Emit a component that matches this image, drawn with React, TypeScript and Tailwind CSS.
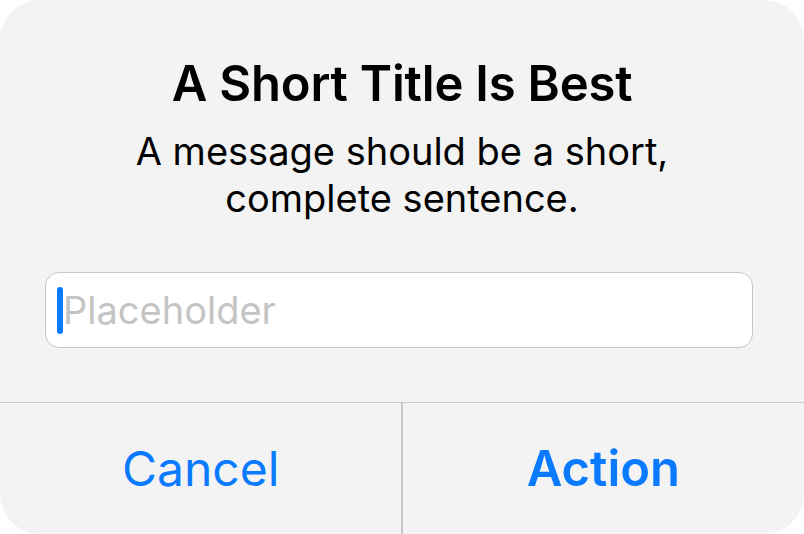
import React from 'react';

export default function App() {
  return (
    <div className="w-[804px] h-[534px] bg-white font-['Inter',sans-serif]">
      <div className="w-full h-full bg-[#f3f3f3] rounded-[40px] flex flex-col overflow-hidden">
        {/* Body */}
        <div className="h-[402px] flex flex-col items-center pt-[55px]">
          <h1 className="text-[49px] leading-[58px] font-semibold text-black tracking-[-0.2px]">A Short Title Is Best</h1>
          <p className="mt-[15px] text-[38px] leading-[47px] text-black text-center">
            A message should be a short,
            <br />
            complete sentence.
          </p>
          <div className="self-start ml-[45px] mt-[50px] w-[708px] h-[76px] bg-white border-[1.5px] border-[#c6c6c6] rounded-[14px] flex items-center pl-[11px]">
            <span className="w-[6px] h-[47px] rounded-full bg-[#0a7aff]" />
            <span className="text-[38px] leading-none text-[#c4c4c4]">Placeholder</span>
          </div>
        </div>

        {/* Buttons */}
        <div className="flex-1 flex border-t-[1.5px] border-[#c8c8c8]">
          <button className="flex-1 flex items-center justify-center text-[48px] text-[#0a7aff]">Cancel</button>
          <div className="w-[1.5px] bg-[#c8c8c8]" />
          <button className="flex-1 flex items-center justify-center text-[49px] font-semibold text-[#0a7aff]">Action</button>
        </div>
      </div>
    </div>
  );
}
